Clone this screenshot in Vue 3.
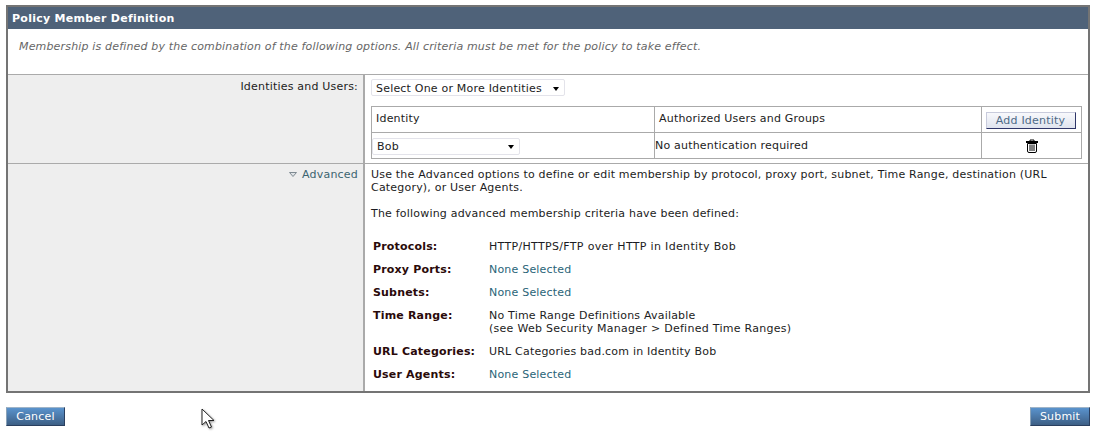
<script setup>
const criteria = [
  { label: 'Protocols:', lines: ['HTTP/HTTPS/FTP over HTTP in Identity Bob'], link: false, wide: true },
  { label: 'Proxy Ports:', lines: ['None Selected'], link: true },
  { label: 'Subnets:', lines: ['None Selected'], link: true },
  { label: 'Time Range:', lines: ['No Time Range Definitions Available', '(see Web Security Manager > Defined Time Ranges)'], link: false },
  { label: 'URL Categories:', lines: ['URL Categories bad.com in Identity Bob'], link: false },
  { label: 'User Agents:', lines: ['None Selected'], link: true },
]
</script>

<template>
  <div class="page">
    <section class="panel">
      <h1 class="title">Policy Member Definition</h1>
      <p class="intro">Membership is defined by the combination of the following options. All criteria must be met for the policy to take effect.</p>

      <div class="row row-identities">
        <div class="label">Identities and Users:</div>
        <div class="value">
          <div class="select select-wide">
            <span class="lowered">Select One or More Identities</span>
            <i class="caret"></i>
          </div>
          <div class="idtable">
            <div class="cell head c1"><span class="raised">Identity</span></div>
            <div class="cell head c2"><span class="raised">Authorized Users and Groups</span></div>
            <div class="cell head c3"><button class="add" type="button">Add Identity</button></div>
            <div class="cell body c1 flush">
              <div class="select select-bob"><span>Bob</span><i class="caret"></i></div>
            </div>
            <div class="cell body c2 flush-text"><span class="raised">No authentication required</span></div>
            <div class="cell body c3 center">
              <svg class="trash" width="14" height="14" viewBox="0 0 14 14" aria-label="Delete">
                <path d="M5 2V1h4v1" fill="none" stroke="#000" stroke-width="1"/>
                <rect x="1" y="2" width="12" height="2" fill="#000"/>
                <path d="M2.500 4.500h9V12a1.500 1.500 0 0 1-1.500 1.500H4A1.500 1.500 0 0 1 2.500 12z" fill="#fff" stroke="#000" stroke-width="1"/>
                <path d="M5 5.500v6.500M7 5.500v6.500M9 5.500v6.500" stroke="#000" stroke-width="1" fill="none"/>
              </svg>
            </div>
          </div>
        </div>
      </div>

      <div class="row row-advanced">
        <div class="label advanced">
          <svg class="tri" width="8" height="5" viewBox="0 0 8 5"><path d="M.5.500h7L4 4.500z" fill="#dfe3e6" stroke="#7f8a92"/></svg>
          <span>Advanced</span>
        </div>
        <div class="value value-adv">
          <p class="desc">Use the Advanced options to define or edit membership by protocol, proxy port, subnet, Time Range, destination (URL Category), or User Agents.</p>
          <p class="desc defined">The following advanced membership criteria have been defined:</p>
          <dl class="criteria">
            <div v-for="c in criteria" :key="c.label" class="crit">
              <dt>{{ c.label }}</dt>
              <dd :class="{ link: c.link, wide: c.wide }">
                <div v-for="l in c.lines" :key="l">{{ l }}</div>
              </dd>
            </div>
          </dl>
        </div>
      </div>
    </section>

    <footer class="actions">
      <button class="btn btn-cancel" type="button">Cancel</button>
      <button class="btn" type="button">Submit</button>
    </footer>

    <svg class="cursor" width="16" height="22" viewBox="0 0 16 22">
      <path d="M1 1v16l4-3.500 3 6.500 2.500-1-3-6.500h5.500z" fill="#fff" stroke="#222" stroke-width="1"/>
    </svg>
  </div>
</template>

<style>
html, body { margin: 0; background: #fff; }
</style>

<style scoped>
.page {
  position: relative;
  width: 1097px;
  height: 436px;
  padding: 5px 7px 0 6px;
  box-sizing: border-box;
  overflow: hidden;
  font-family: "DejaVu Sans", Verdana, sans-serif;
  font-size: 11px;
  line-height: 13px;
  letter-spacing: 0.2px;
  color: #1c1c22;
}
.panel {
  border: 2px solid #747474;
  height: 388px;
  box-sizing: border-box;
  display: flex;
  flex-direction: column;
  overflow: hidden;
}
.title {
  margin: 0;
  height: 22px;
  background: #4f6279;
  color: #fff;
  font-size: 11px;
  font-weight: bold;
  line-height: 23px;
  letter-spacing: 0.26px;
  padding-left: 4px;
  flex: none;
}
.intro {
  margin: 0;
  height: 45px;
  box-sizing: border-box;
  padding: 11px 0 0 11px;
  font-style: italic;
  letter-spacing: 0.165px;
  color: #666;
  flex: none;
}
.row {
  display: grid;
  grid-template-columns: 357px 1fr;
  border-top: 1px solid #aaa;
}
.row-identities { height: 88px; flex: none; }
.row-advanced { flex: 1; min-height: 0; }
.label {
  background: #eee;
  border-right: 2px solid #aaa;
  text-align: right;
  padding: 5px 5px 0 0;
}
.advanced {
  color: #3c6470;
  padding-top: 4px;
  display: flex;
  justify-content: flex-end;
  align-items: flex-start;
  gap: 5px;
}
.tri { margin-top: 4px; }
.value { padding: 4px 7px 0 6px; min-width: 0; }
.select {
  height: 17px;
  box-sizing: border-box;
  border: 1px solid #e3e3ea;
  border-radius: 2px;
  background: #fff;
  display: flex;
  align-items: center;
  justify-content: space-between;
  padding: 0 5px 0 4px;
}
.lowered { margin-top: 1px; }
.select-wide { width: 194px; }
.select-bob { width: 148px; }
.caret {
  width: 0; height: 0;
  border-left: 3.5px solid transparent;
  border-right: 3.5px solid transparent;
  border-top: 4px solid #000;
  margin-top: 2px;
}
.idtable {
  margin-top: 10px;
  display: grid;
  grid-template-columns: 283px 327px 1fr;
  grid-template-rows: 26px 26px;
  width: 711px;
  border: 1px solid #aaa;
  box-sizing: border-box;
  height: 53px;
}
.cell { box-sizing: border-box; padding-left: 4px; display: flex; align-items: center; }
.head { border-bottom: 1px solid #aaa; }
.c1 { border-right: 1px solid #aaa; }
.c2 { border-right: 1px solid #aaa; }
.raised { margin-bottom: 2px; }
.flush { padding-left: 0; }
.flush-text { padding-left: 0; }
.center { justify-content: center; padding-left: 0; }
.c3.head { padding-left: 0; justify-content: center; }
.add {
  width: 90px;
  height: 17px;
  margin: 2px 2px 0 0;
  padding: 0;
  font: inherit;
  letter-spacing: inherit;
  line-height: 14px;
  color: #4e6a86;
  background: linear-gradient(#f8f9fc, #dfe3ee);
  border: 1px solid #c8cbdc;
  border-right-color: #2e3568;
  border-bottom-color: #2e3568;
}
.value-adv { padding-top: 4px; }
.desc { margin: 0; }
.defined { margin-top: 13px; }
.criteria { margin: 20px 0 0 2px; }
.crit {
  display: grid;
  grid-template-columns: 116px 1fr;
  margin-bottom: 10px;
}
dt { font-weight: bold; letter-spacing: 0.18px; color: #2a0a0a; }
dd { margin: 0; }
dd div + div { letter-spacing: 0.27px; }
.wide { letter-spacing: 0.33px; }
.link { color: #2a6478; }
.actions {
  display: flex;
  justify-content: space-between;
  margin-top: 14px;
}
.btn {
  width: 60px;
  height: 19px;
  padding: 0;
  font: inherit;
  letter-spacing: inherit;
  color: #fff;
  background: linear-gradient(#5a93cd, #3d5f85);
  border: 1px solid #3e5b7c;
  border-top-color: #9fb4c8;
  border-left-color: #8aa2b8;
  border-right-color: #2a3f5f;
  border-bottom-color: #2a3f5f;
}
.btn-cancel { width: 59px; }
.cursor { position: absolute; left: 201px; top: 408px; filter: drop-shadow(1px 1px 1px #999); }
</style>
